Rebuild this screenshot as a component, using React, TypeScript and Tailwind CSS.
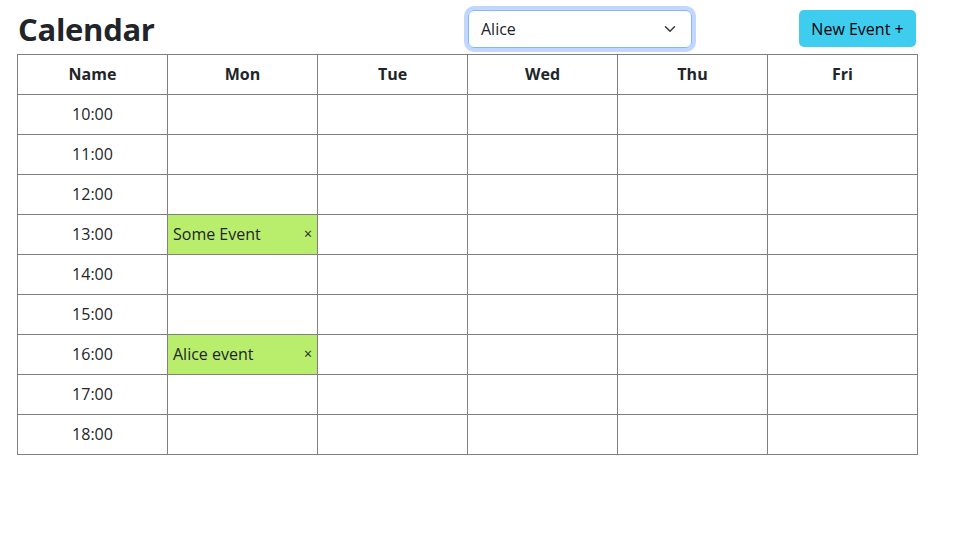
import React from "react";

const days = ["Mon", "Tue", "Wed", "Thu", "Fri"];
const times = ["10:00", "11:00", "12:00", "13:00", "14:00", "15:00", "16:00", "17:00", "18:00"];
const events: Record<string, string> = { "13:00-Mon": "Some Event", "16:00-Mon": "Alice event" };

export default function App() {
  return (
    <div className="min-h-[533px] w-[958px] bg-white text-[#212529]" style={{ fontFamily: '"Open Sans", "Noto Sans", sans-serif' }}>
      <div className="flex items-center h-[54px] pl-[17px]">
        <h1 className="text-[31px] font-bold leading-none tracking-[-0.3px] w-[451px] pl-[1px] pt-[4px]">Calendar</h1>
        <div className="mt-[4px] w-[224px] h-[38px] rounded-[6px] border border-[#86b7fe] shadow-[0_0_0_4px_#c2d7fd] flex items-center justify-between pl-[12px] pr-[15px] text-[16px]">
          <span className="pb-[1px]">Alice</span>
          <svg width="12" height="12" viewBox="0 0 16 16" fill="none" stroke="#343a40" strokeWidth="2" strokeLinecap="round" strokeLinejoin="round">
            <path d="M2 5l6 6 6-6" />
          </svg>
        </div>
        <button className="ml-[107px] mt-[3px] w-[117px] h-[37px] rounded-[5px] bg-[#3ecdef] text-[16px] text-black">New Event +</button>
      </div>
      <div className="ml-[17px] grid grid-cols-[repeat(6,150px)] w-[901px] border-l border-t border-[#808080] text-[16px]">
        {["Name", ...days].map((d) => (
          <div key={d} className="h-[40px] border-r border-b border-[#808080] flex items-center justify-center font-bold pb-[2px]">{d}</div>
        ))}
        {times.map((t) => (
          <React.Fragment key={t}>
            <div className="h-[40px] border-r border-b border-[#808080] flex items-center justify-center pb-[2px]">{t}</div>
            {days.map((d) => {
              const ev = events[`${t}-${d}`];
              return ev ? (
                <div key={d} className="h-[40px] border-r border-b border-[#808080] bg-[#b8ee6c] flex items-center justify-between pl-[5px] pr-[5px] pb-[2px]">
                  <span>{ev}</span>
                  <span className="text-[14px]">×</span>
                </div>
              ) : (
                <div key={d} className="h-[40px] border-r border-b border-[#808080]" />
              );
            })}
          </React.Fragment>
        ))}
      </div>
    </div>
  );
}
